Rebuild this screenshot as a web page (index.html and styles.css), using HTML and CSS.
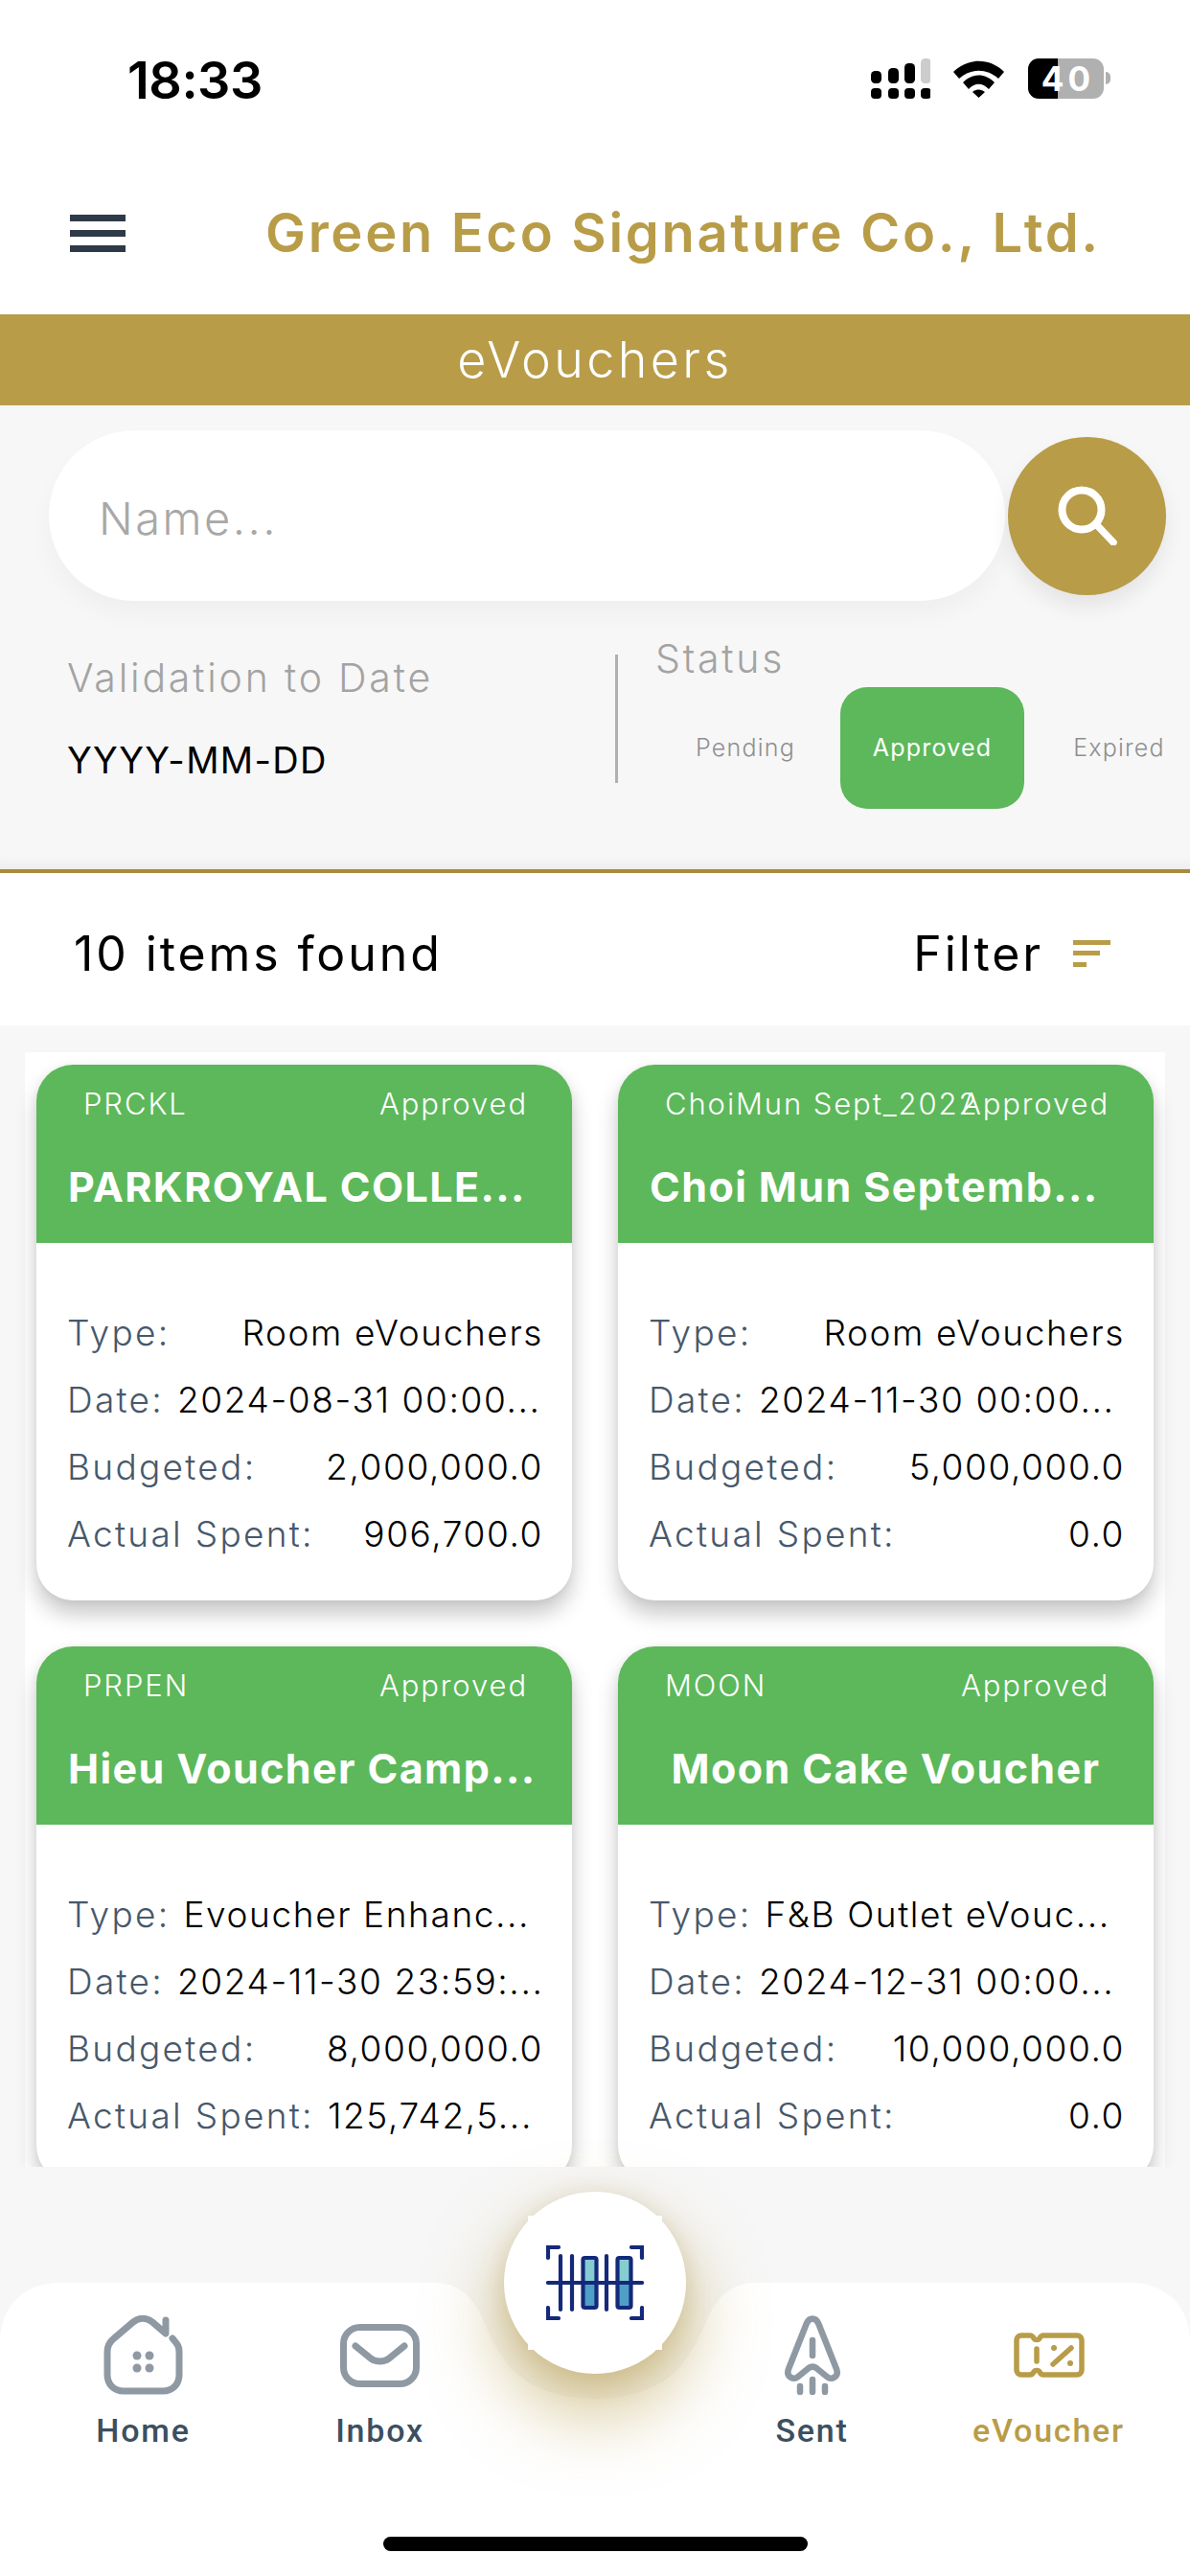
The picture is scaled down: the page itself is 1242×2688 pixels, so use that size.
FILE: index.html
```html
<!DOCTYPE html>
<html lang="en">
<head>
<meta charset="utf-8">
<title>eVouchers</title>
<link rel="stylesheet" href="styles.css">
</head>
<body>
<div class="app">
  <div class="status">
    <span class="time">18:33</span>
    <div class="status-icons">
      <svg class="signal" width="62" height="42" viewBox="0 0 62 42">
        <g fill="#000">
          <rect x="0" y="13" width="11" height="13" rx="4.500"/><rect x="18" y="10" width="11" height="16" rx="4.500"/><rect x="35" y="5" width="11" height="21" rx="4.500"/>
          <rect x="52" y="0" width="11" height="26" rx="4.500" fill="#ccc"/>
          <rect x="0" y="31" width="11" height="11" rx="4"/><rect x="18" y="31" width="11" height="11" rx="4"/><rect x="35" y="31" width="11" height="11" rx="4"/><rect x="52" y="31" width="11" height="11" rx="4"/>
        </g>
      </svg>
      <svg class="wifi" width="53" height="39" viewBox="0 0 53 39">
        <path d="M0 12C15 -3 38 -3 53 12L47 19C35 8 18 8 6 19ZM10 23C20 13 33 13 43 23L37 30C30 23 23 23 16 30ZM20 33C24 29.500 29 29.500 33 33L26.500 39Z" fill="#000"/>
      </svg>
      <div class="battery"><span class="battery-level">40</span></div>
    </div>
  </div>

  <header class="topbar">
    <div class="burger"><span></span><span></span><span></span></div>
    <h1 class="company">Green Eco Signature Co., Ltd.</h1>
  </header>

  <div class="band">eVouchers</div>

  <section class="filters">
    <div class="search-row">
      <input class="search-input" type="text" placeholder="Name...">
      <div class="search-btn">
        <svg width="62" height="62" viewBox="0 0 62 62"><circle cx="25" cy="25" r="20.500" fill="none" stroke="#fff" stroke-width="8"/><path d="M40 40L58 59" stroke="#fff" stroke-width="7.500" stroke-linecap="round"/></svg>
      </div>
    </div>
    <div class="filter-row">
      <div class="date-col">
        <div class="filter-label">Validation to Date</div>
        <div class="date-value">YYYY-MM-DD</div>
      </div>
      <div class="divider"></div>
      <div class="status-col">
        <div class="filter-label">Status</div>
        <div class="chips">
          <div class="chip">Pending</div>
          <div class="chip chip-on">Approved</div>
          <div class="chip">Expired</div>
        </div>
      </div>
    </div>
  </section>

  <div class="result-bar">
    <span class="result-count">10 items found</span>
    <div class="filter-btn">
      <span>Filter</span>
      <svg width="39" height="28" viewBox="0 0 39 28"><rect x="0" y="0" width="39" height="5" fill="#b89c48"/><rect x="0" y="11" width="28" height="5" fill="#b89c48"/><rect x="0" y="23" width="14" height="5" fill="#b89c48"/></svg>
    </div>
  </div>

  <main class="list">
    <div class="panel">
      <article class="card">
        <div class="card-head">
          <div class="card-top"><span class="code">PRCKL</span><span class="state">Approved</span></div>
          <div class="card-title card-title-cut">PARKROYAL COLLE...</div>
        </div>
        <div class="card-body">
          <div class="row"><span class="key">Type:</span><span class="val">Room eVouchers</span></div>
          <div class="row row-fill"><span class="key">Date:</span><span class="val">2024-08-31 00:00...</span></div>
          <div class="row"><span class="key">Budgeted:</span><span class="val">2,000,000.0</span></div>
          <div class="row"><span class="key">Actual Spent:</span><span class="val">906,700.0</span></div>
        </div>
      </article>
      <article class="card">
        <div class="card-head">
          <div class="card-top"><span class="code">ChoiMun Sept_2022</span><span class="state">Approved</span></div>
          <div class="card-title card-title-cut">Choi Mun Septemb...</div>
        </div>
        <div class="card-body">
          <div class="row"><span class="key">Type:</span><span class="val">Room eVouchers</span></div>
          <div class="row row-fill"><span class="key">Date:</span><span class="val">2024-11-30 00:00...</span></div>
          <div class="row"><span class="key">Budgeted:</span><span class="val">5,000,000.0</span></div>
          <div class="row"><span class="key">Actual Spent:</span><span class="val">0.0</span></div>
        </div>
      </article>
      <article class="card">
        <div class="card-head">
          <div class="card-top"><span class="code">PRPEN</span><span class="state">Approved</span></div>
          <div class="card-title card-title-cut">Hieu Voucher Camp...</div>
        </div>
        <div class="card-body">
          <div class="row row-fill"><span class="key">Type:</span><span class="val">Evoucher Enhanc...</span></div>
          <div class="row row-fill"><span class="key">Date:</span><span class="val">2024-11-30 23:59:...</span></div>
          <div class="row"><span class="key">Budgeted:</span><span class="val">8,000,000.0</span></div>
          <div class="row row-fill"><span class="key">Actual Spent:</span><span class="val">125,742,5...</span></div>
        </div>
      </article>
      <article class="card">
        <div class="card-head">
          <div class="card-top"><span class="code">MOON</span><span class="state">Approved</span></div>
          <div class="card-title">Moon Cake Voucher</div>
        </div>
        <div class="card-body">
          <div class="row row-fill"><span class="key">Type:</span><span class="val">F&amp;B Outlet eVouc...</span></div>
          <div class="row row-fill"><span class="key">Date:</span><span class="val">2024-12-31 00:00...</span></div>
          <div class="row"><span class="key">Budgeted:</span><span class="val">10,000,000.0</span></div>
          <div class="row"><span class="key">Actual Spent:</span><span class="val">0.0</span></div>
        </div>
      </article>
    </div>
  </main>

  <nav class="nav">
    <svg class="nav-shape" width="1242" height="306" viewBox="0 0 1242 306">
      <path fill="#fff" d="M0 306V62C0 24 26 0 62 0H452C480 0 494 16 504 38C516 66 522 75 532 88C552 110 585 121 621 121C657 121 690 110 710 88C720 75 726 66 738 38C748 16 762 0 790 0H1180C1216 0 1242 24 1242 62V306Z"/>
    </svg>
    <a class="nav-item">
      <span class="nav-icon">
        <svg width="83" height="83" viewBox="0 0 83 83">
          <path d="M72 24C76 29 79 31 79 38V62C79 72 72 79 62 79H21C11 79 4 72 4 62V38C4 32 6 28 11 24L31 7C37 2 45 2 51 7L65 19V5" fill="none" stroke="#8e99a3" stroke-width="7" stroke-linecap="round" stroke-linejoin="round"/>
          <g fill="#8e99a3"><circle cx="35" cy="42" r="4.500"/><circle cx="48" cy="42" r="4.500"/><circle cx="35" cy="55" r="4.500"/><circle cx="48" cy="55" r="4.500"/></g>
        </svg>
      </span>
      <span class="nav-label">Home</span>
    </a>
    <a class="nav-item">
      <span class="nav-icon">
        <svg width="83" height="66" viewBox="0 0 83 66">
          <rect x="3.500" y="3.500" width="76" height="59" rx="17" fill="none" stroke="#8e99a3" stroke-width="7"/>
          <path d="M16 23L32 36C37 40 46 40 51 36L67 23" fill="none" stroke="#8e99a3" stroke-width="7" stroke-linecap="round"/>
        </svg>
      </span>
      <span class="nav-label">Inbox</span>
    </a>
    <div class="nav-gap"></div>
    <a class="nav-item">
      <span class="nav-icon">
        <svg width="60" height="83" viewBox="0 0 60 83">
          <path d="M24 8C27 2 33 2 36 8L55 56C58 64 50 68 45 64L34 55C31 53 29 53 26 55L15 64C10 68 2 64 5 56Z" fill="none" stroke="#8e99a3" stroke-width="6.500" stroke-linejoin="round"/>
          <path d="M30 26V42M30 67V80M17 74V80M43 74V80" stroke="#8e99a3" stroke-width="6.500" stroke-linecap="round"/>
        </svg>
      </span>
      <span class="nav-label">Sent</span>
    </a>
    <a class="nav-item nav-item-on">
      <span class="nav-icon">
        <svg width="74" height="47" viewBox="0 0 74 47">
          <path d="M8 3H17C19 3 20 4 21 6C22 8 26 8 27 6C28 4 29 3 31 3H66C69 3 71 5 71 8V39C71 42 69 44 66 44H31C29 44 28 43 27 41C26 39 22 39 21 41C20 43 19 44 17 44H8C5 44 3 42 3 39V8C3 5 5 3 8 3Z" fill="none" stroke="#b89c48" stroke-width="5.500" stroke-linejoin="round"/>
          <path d="M24 17V30M60 16L41 33" stroke="#b89c48" stroke-width="5.500" stroke-linecap="round"/>
          <circle cx="42" cy="16" r="3" fill="#b89c48"/><circle cx="59" cy="32" r="3" fill="#b89c48"/>
        </svg>
      </span>
      <span class="nav-label">eVoucher</span>
    </a>
    <div class="scan">
      <svg class="scan-icon" width="102" height="78" viewBox="0 0 102 78">
        <rect x="38.500" y="13" width="14" height="26" fill="#85cdd0"/><rect x="38.500" y="39" width="14" height="26" fill="#4f9fc9"/>
        <rect x="74.500" y="13" width="14" height="26" fill="#85cdd0"/><rect x="74.500" y="39" width="14" height="26" fill="#4f9fc9"/>
        <g fill="none" stroke="#14297a" stroke-width="4.200" stroke-linecap="round">
          <path d="M2 13V2H13M89 2H100V13M2 65V76H13M89 76H100V65M2 39H100M15 11V67M27 11V67M63 11V67"/>
          <rect x="38.500" y="13" width="14" height="52" rx="2"/><rect x="74.500" y="13" width="14" height="52" rx="2"/>
        </g>
      </svg>
    </div>
    <div class="home-bar"></div>
  </nav>
</div>
</body>
</html>
```

FILE: styles.css
```css
* { box-sizing: border-box; }
html, body { margin: 0; padding: 0; background: #fff; }
body { font-family: Inter, "Liberation Sans", sans-serif; color: #000; }
.app { width: 1242px; height: 2688px; overflow: hidden; display: flex; flex-direction: column; background: #fff; }

.status { height: 164px; flex: none; display: flex; justify-content: space-between; align-items: center; padding: 2px 90px 0 133px; }
.time { font-size: 54px; font-weight: 600; letter-spacing: -0.5px; }
.status-icons { display: flex; align-items: center; margin-top: -2px; }
.signal { margin-right: 24px; }
.wifi { margin-right: 25px; }
.battery { position: relative; width: 79px; height: 42px; border-radius: 11px; background: linear-gradient(90deg, #000 0 31px, #b0b0b0 31px); display: flex; align-items: center; justify-content: center; }
.battery::after { content: ""; position: absolute; right: -7px; top: 14px; width: 5px; height: 13px; border-radius: 0 6px 6px 0; background: #b0b0b0; }
.battery-level { color: #fff; font-size: 35px; font-weight: 700; letter-spacing: 4px; margin-right: -4px; }

.topbar { height: 164px; flex: none; display: flex; align-items: center; padding: 0 0 6px 73px; }
.burger { width: 58px; height: 39px; display: flex; flex-direction: column; justify-content: space-between; flex: none; }
.burger span { display: block; height: 7px; background: #2f3a48; }
.company { margin: 0 0 0 146px; font-size: 56px; font-weight: 600; letter-spacing: 2.700px; color: #b89c48; white-space: nowrap; line-height: 1; }

.band { height: 95px; flex: none; background: #b89c48; color: #fff; font-size: 52px; font-weight: 300; letter-spacing: 3.400px; display: flex; align-items: center; justify-content: center; }

.filters { height: 488px; flex: none; background: #f7f7f7; border-bottom: 4px solid #a98a3c; box-shadow: inset 0 -14px 14px -10px rgba(0,0,0,.05); padding-top: 26px; }
.search-row { display: flex; align-items: center; padding-left: 51px; height: 178px; }
.search-input { width: 998px; height: 178px; border: 0; outline: 0; border-radius: 89px; background: #fff; padding: 5px 54px 0 52px; font: 300 47px Inter, sans-serif; letter-spacing: 2.500px; box-shadow: 0 14px 26px rgba(0,0,0,.035); }
.search-input::placeholder { color: #a8a8a8; opacity: 1; }
.search-btn { width: 165px; height: 165px; margin-left: 3px; flex: none; border-radius: 50%; background: #b89c48; display: flex; align-items: center; justify-content: center; box-shadow: 0 12px 22px rgba(0,0,0,.08); }

.filter-row { display: flex; align-items: flex-start; margin-top: 38px; }
.date-col { width: 642px; flex: none; padding: 20px 0 0 70px; }
.filter-label { font-size: 41px; font-weight: 300; letter-spacing: 2.800px; color: #a3a3a3; line-height: 44px; }
.date-value { margin-top: 42px; font-size: 38px; font-weight: 400; letter-spacing: 1.300px; line-height: 44px; color: #000; }
.divider { width: 3px; height: 134px; margin-top: 18px; flex: none; background: #b0b0b0; }
.status-col { padding-left: 39px; }
.chips { display: flex; gap: 3px; margin: 8px 0 0 -2px; }
.chip { width: 192px; height: 127px; flex: none; border-radius: 28px; display: flex; align-items: center; justify-content: center; padding-bottom: 2px; font-size: 25px; font-weight: 300; letter-spacing: 1.200px; color: #8f8f8f; }
.chip-on { background: #5cb85a; color: #fff; font-weight: 400; }

.result-bar { height: 159px; flex: none; background: #fff; display: flex; align-items: center; justify-content: space-between; padding: 8px 83px 0 77px; }
.result-count { font-size: 50px; font-weight: 400; letter-spacing: 2.900px; }
.filter-btn { display: flex; align-items: center; gap: 31px; font-size: 50px; letter-spacing: 2.900px; }

.list { height: 1191px; flex: none; background: #f7f7f7; padding-top: 28px; overflow: hidden; }
.panel { width: 1190px; margin-left: 26px; height: 100%; background: #fff; padding: 13px 12px 0; display: grid; grid-template-columns: 559px 559px; grid-auto-rows: 559px; gap: 48px; }

.card { border-radius: 38px; background: #fff; box-shadow: 0 14px 22px rgba(0,0,0,.22), 0 0 8px rgba(0,0,0,.05); overflow: hidden; }
.card-head { height: 186px; background: #5cb85a; color: #fff; }
.card-top { display: flex; padding: 22px 46px 0 49px; font-size: 31px; font-weight: 300; letter-spacing: 1.900px; line-height: 38px; }
.code { flex: 1 1 0; min-width: 0; white-space: nowrap; }
.state { flex: none; }
.card-title { margin-top: 42px; padding: 0 33px; text-align: center; font-size: 43px; font-weight: 700; letter-spacing: 1.400px; line-height: 50px; white-space: nowrap; }
.card-title-cut { text-align: left; }
.card-body { padding: 59px 30px 0 32px; }
.row { display: flex; justify-content: space-between; height: 70px; font-size: 37px; line-height: 70px; white-space: nowrap; letter-spacing: 1.600px; }
.row-fill { justify-content: flex-start; gap: 14px; }
.key { color: #47586b; font-weight: 300; letter-spacing: 2.300px; }
.val { color: #000; font-weight: 350; }

.nav { position: relative; flex: 1; background: #f7f7f7; display: grid; grid-template-columns: 247px 247px 204px 247px 247px; padding: 155px 26px 0; align-items: start; }
.nav-shape { position: absolute; left: 0; bottom: 0; }
.nav-item { position: relative; z-index: 2; display: flex; flex-direction: column; align-items: center; }
.nav-icon { height: 83px; display: flex; align-items: center; justify-content: center; }
.nav-label { margin-top: 17px; font-family: Roboto, sans-serif; font-size: 34px; font-weight: 500; letter-spacing: 1.800px; line-height: 40px; color: #3c4f60; }
.nav-item-on .nav-label { color: #b89c48; }
.scan { position: absolute; z-index: 1; left: 526px; top: 26px; width: 190px; height: 190px; border-radius: 50%; background: #fff; display: flex; align-items: center; justify-content: center; box-shadow: 0 36px 70px 10px rgba(184,156,72,.5), 0 10px 26px rgba(184,156,72,.25), 0 0 26px rgba(0,0,0,.04); }
.scan::before { content: ""; position: absolute; left: 25px; top: 25px; width: 140px; height: 140px; background: #fff; }
.scan-icon { position: relative; }
.home-bar { position: absolute; z-index: 2; left: 400px; bottom: 26px; width: 443px; height: 15px; border-radius: 8px; background: #000; }
```
